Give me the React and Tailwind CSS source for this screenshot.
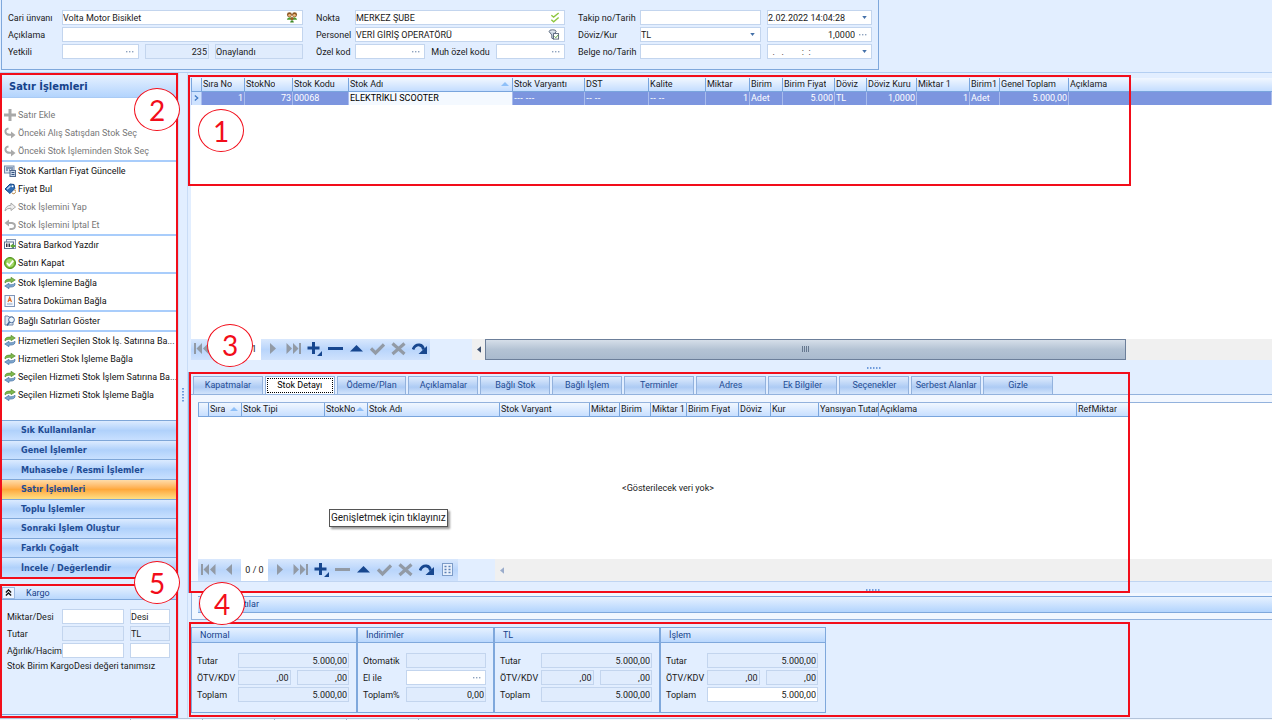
import React from "react";

const BOX = "flex h-[15px] min-w-0 items-center border border-[#c3d5ee] pr-px";

function Dots() {
  return (
    <svg viewBox="0 0 8 2" className="h-[2px] w-[8px]" fill="#8fa3bf">
      <rect x="0" width="1.4" height="1.4" />
      <rect x="3" width="1.4" height="1.4" />
      <rect x="6" width="1.4" height="1.4" />
    </svg>
  );
}

function Caret() {
  return (
    <svg viewBox="0 0 6 4" className="h-[3px] w-[5px]" fill="#4470a8">
      <path d="M0 0h6L3 4z" />
    </svg>
  );
}

function People() {
  return (
    <svg viewBox="0 0 12 12" className="h-[11px] w-[12px]">
      <circle cx="3.2" cy="3" r="2.700" fill="#8a5420" />
      <circle cx="8.8" cy="3" r="2.700" fill="#8a5420" />
      <circle cx="3.4" cy="3.6" r="1.5" fill="#efb67e" />
      <circle cx="8.6" cy="3.6" r="1.5" fill="#efb67e" />
      <path d="M.4 8.500Q.8 5.600 3.400 5.600T6 7.400Q6.300 5.600 8.600 5.600T11.600 8.500z" fill="#4d9a2e" />
      <circle cx="6" cy="7.200" r="1.800" fill="#9c5f2c" />
      <path d="M4 11.500Q4.200 9 6 9t2 2.500z" fill="#3f8a2a" />
    </svg>
  );
}

function DoubleCheck() {
  return (
    <svg viewBox="0 0 10 12" className="h-[11px] w-[10px]" fill="none" stroke="#8cc63f" strokeWidth="1.500">
      <path d="M1 3.500l2.500 2L9 1M1 8.500l2.500 2.200L9 6" />
    </svg>
  );
}

function Filter() {
  return (
    <svg viewBox="0 0 12 12" className="h-[11px] w-[12px]" fill="none" stroke="#566579">
      <ellipse cx="4.500" cy="2.500" rx="3.800" ry="1.600" fill="#e6ecf3" />
      <path d="M.8 3L3.600 6.500V10l2 1V6.500L8.200 3" fill="#cdd8e4" />
      <rect x="5.500" y="5" width="5.500" height="6" fill="#fff" />
      <path d="M6.500 8l1.500 1.500 2.500-3" stroke="#4b9a2f" />
    </svg>
  );
}

const ends = { dots: Dots, caret: Caret, people: People, check: DoubleCheck, filter: Filter };

function Field({ id, label, value = "", width, end, right, locked }) {
  const End = end ? ends[end] : null;
  return (
    <div className={`${BOX} ${width} ${locked ? "bg-[#e0ecfd]" : "bg-white"}`}>
      <input
        id={id}
        aria-label={label}
        defaultValue={value}
        readOnly={locked}
        className={`w-0 min-w-0 flex-1 bg-transparent outline-none ${right ? "text-right" : ""}`}
      />
      {End && (
        <button type="button" aria-label={`${label} seç`} className="ml-1 flex shrink-0 items-center justify-center pr-[3px]">
          <End />
        </button>
      )}
    </div>
  );
}

function Row({ htmlFor, text, labelWidth, children }) {
  return (
    <div className="flex h-[15px] items-center">
      <label htmlFor={htmlFor} className={`shrink-0 whitespace-nowrap ${labelWidth}`}>
        {text}
      </label>
      <div className="flex min-w-0 flex-1 items-center gap-[6px]">{children}</div>
    </div>
  );
}

function TopForm() {
  return (
    <header className="ml-px flex w-[878px] gap-[13px] border-x border-b border-[#7fa8dc] bg-[#e2eeff] py-[10px] pl-[6px] pr-[6px]">
      <div className="flex w-[295px] flex-col gap-[2px]">
        <Row htmlFor="cari" text="Cari ünvanı" labelWidth="w-[54px]">
          <Field id="cari" label="Cari ünvanı" value="Volta Motor Bisiklet" width="flex-1" end="people" />
        </Row>
        <Row htmlFor="aciklama" text="Açıklama" labelWidth="w-[54px]">
          <Field id="aciklama" label="Açıklama" width="flex-1" />
        </Row>
        <Row htmlFor="yetkili" text="Yetkili" labelWidth="w-[54px]">
          <Field id="yetkili" label="Yetkili" width="w-[77px]" end="dots" />
          <Field label="Yetkili no" value="235" width="w-[64px]" right locked />
          <Field label="Durum" value="Onaylandı" width="flex-1" locked />
        </Row>
      </div>
      <div className="flex w-[249px] flex-col gap-[2px]">
        <Row htmlFor="nokta" text="Nokta" labelWidth="w-[39px]">
          <Field id="nokta" label="Nokta" value="MERKEZ ŞUBE" width="flex-1" end="check" />
        </Row>
        <Row htmlFor="personel" text="Personel" labelWidth="w-[39px]">
          <Field id="personel" label="Personel" value="VERİ GİRİŞ OPERATÖRÜ" width="flex-1" end="filter" />
        </Row>
        <Row htmlFor="ozel" text="Özel kod" labelWidth="w-[39px]">
          <Field id="ozel" label="Özel kod" width="w-[72px]" end="dots" />
          <label htmlFor="muh" className="flex-1 whitespace-nowrap">Muh özel kodu</label>
          <Field id="muh" label="Muh özel kodu" width="w-[71px]" end="dots" />
        </Row>
      </div>
      <div className="flex min-w-0 flex-1 flex-col gap-[2px]">
        <Row htmlFor="takip" text="Takip no/Tarih" labelWidth="w-[62px]">
          <Field id="takip" label="Takip no" width="w-[121px]" />
          <Field label="Takip tarihi" value="2.02.2022 14:04:28" width="flex-1" end="caret" />
        </Row>
        <Row htmlFor="doviz" text="Döviz/Kur" labelWidth="w-[62px]">
          <div className={`${BOX} w-[121px] bg-white`}>
            <select id="doviz" className="w-0 flex-1 appearance-none bg-transparent outline-none">
              <option>TL</option>
            </select>
            <span className="pr-[4px]"><Caret /></span>
          </div>
          <Field label="Kur" value="1,0000" width="flex-1" end="dots" right />
        </Row>
        <Row htmlFor="belge" text="Belge no/Tarih" labelWidth="w-[62px]">
          <Field id="belge" label="Belge no" width="w-[121px]" />
          <Field label="Belge tarihi" value="  .   .        :  :" width="flex-1" end="caret" />
        </Row>
      </div>
    </header>
  );
}

const icons = {
  add: <path d="M4.500 0h3v4.500H12v3H7.500V12h-3V7.500H0v-3h4.500z" fill="#a9a9a9" />,
  pick: (
    <g>
      <path d="M4.500 1.500Q1 2 1.500 5t5 2.800H8" fill="none" stroke="#a9a9a9" strokeWidth="2" />
      <path d="M7 4.500L11.500 8 7 11.500z" fill="#a9a9a9" />
    </g>
  ),
  price: (
    <g>
      <rect x=".5" y="1" width="9.500" height="7" fill="#dbe5f2" stroke="#7489a8" />
      <path d="M2 3h7M2 5h2M5 5h1M7 5h2" stroke="#33527f" strokeWidth="1.200" />
      <rect x="6" y="5.500" width="5.500" height="6" fill="#c9d6e8" stroke="#50688d" />
      <path d="M7.500 7.500h3M7.500 9.500h3" stroke="#33527f" />
    </g>
  ),
  tag: (
    <g>
      <path d="M1 6L6 1l4 .5.8 4L6 10.500z" fill="#2f6cb3" stroke="#174a8a" />
      <path d="M3 6.300L6.500 3" stroke="#b8d4f4" strokeWidth="1.400" />
      <circle cx="8.500" cy="3.200" r="1" fill="#fff" />
      <path d="M8 10q2 2 3.500-.5T10 7" fill="none" stroke="#b98a4a" />
    </g>
  ),
  forward: <path d="M1 10Q1.500 4.500 7 4.200V2l4.500 4L7 9.500V7.200Q3 7 1 10z" fill="#eee" stroke="#a9a9a9" />,
  undo: (
    <g>
      <path d="M4 4h4q3 .3 3 3t-3 3H5.500" fill="none" stroke="#a9a9a9" strokeWidth="1.800" />
      <path d="M5 .5v7L.5 4z" fill="#a9a9a9" />
    </g>
  ),
  barcode: (
    <g>
      <rect x="2.500" y=".5" width="9" height="9" fill="#eef3fa" stroke="#8496b3" />
      <rect x=".5" y="3" width="9" height="6.500" fill="#fff" stroke="#5f7291" />
      <path d="M2.500 4.500v3.500M4 4.500v3.500M5.500 4.500v3.500" stroke="#334" />
      <path d="M6 7l3-2.500V6h2.500v2H9v1.500z" fill="#62a83a" />
    </g>
  ),
  ok: (
    <g>
      <circle cx="6" cy="6" r="5.500" fill="#79bd35" stroke="#4f8f1c" />
      <circle cx="6" cy="6" r="3.900" fill="#a5d86c" />
      <path d="M3 6l2.200 2.500L9.300 3.600" fill="none" stroke="#fff" strokeWidth="1.700" />
    </g>
  ),
  link: (
    <g>
      <path d="M1 6Q.5 2.300 5 2.100h2V.3L11.300 3 7 5.700V4.300H5Q2.500 4.300 1 6z" fill="#7fb94c" stroke="#4d8428" strokeWidth=".6" />
      <path d="M11 6.200q.5 3.700-4 3.900H5v1.600L.7 9 5 6.300v1.400h2q2.500 0 4-1.500z" fill="#7da6cf" stroke="#3a689a" strokeWidth=".6" />
    </g>
  ),
  doc: (
    <g>
      <rect x="1" y=".5" width="9.500" height="11" fill="#f5f8fd" stroke="#7f95b8" />
      <path d="M4 7L5.700 2.500 7.500 7M4.500 5.500h2.500" fill="none" stroke="#df702b" strokeWidth="1.200" />
      <path d="M3 9h5.500" stroke="#8ea3c2" />
    </g>
  ),
  search: (
    <g>
      <path d="M1 1h3l1 1h4v8H1z" fill="#dfe8f4" stroke="#7388a9" />
      <circle cx="7.500" cy="4.800" r="2.900" fill="#eef8ff" stroke="#46689a" />
      <path d="M5.500 7L3 10.500" stroke="#46689a" strokeWidth="1.600" />
    </g>
  ),
};

const actionGroups = [
  [
    ["add", "Satır Ekle", true],
    ["pick", "Önceki Alış Satışdan Stok Seç", true],
    ["pick", "Önceki Stok İşleminden Stok Seç", true],
  ],
  [
    ["price", "Stok Kartları Fiyat Güncelle"],
    ["tag", "Fiyat Bul"],
    ["forward", "Stok İşlemini Yap", true],
    ["undo", "Stok İşlemini İptal Et", true],
  ],
  [
    ["barcode", "Satıra Barkod Yazdır"],
    ["ok", "Satırı Kapat"],
  ],
  [
    ["link", "Stok İşlemine Bağla"],
    ["doc", "Satıra Doküman Bağla"],
  ],
  [["search", "Bağlı Satırları Göster"]],
  [
    ["link", "Hizmetleri Seçilen Stok İş. Satırına Ba..."],
    ["link", "Hizmetleri Stok İşleme Bağla"],
    ["link", "Seçilen Hizmeti Stok İşlem Satırına Ba..."],
    ["link", "Seçilen Hizmeti Stok İşleme Bağla"],
  ],
];

const sections = [
  "Sık Kullanılanlar",
  "Genel İşlemler",
  "Muhasebe / Resmi İşlemler",
  "Satır İşlemleri",
  "Toplu İşlemler",
  "Sonraki İşlem Oluştur",
  "Farklı Çoğalt",
  "İncele / Değerlendir",
];

function Frame({ size = "inset-0" }) {
  return <div className={`pointer-events-none absolute z-10 border-2 border-[#f20d1a] ${size}`} />;
}

function Badge({ n, place }) {
  return (
    <div
      className={`absolute z-20 flex h-[43px] w-[46px] items-center justify-center rounded-[50%] border border-[#f20d1a] bg-white font-[Lato,sans-serif] text-[28px] leading-none text-[#f20d1a] ${place}`}
    >
      {n}
    </div>
  );
}

function Sidebar() {
  return (
    <section className="relative flex flex-1 flex-col bg-white p-[2px]">
      <h2 className="h-[23px] shrink-0 border-b border-[#a9cbf5] bg-linear-to-b from-[#e6f1ff] to-[#b3d4fd] pl-[7px] font-['DejaVu_Sans_Condensed',sans-serif] text-[11px] font-bold leading-[24px] text-[#15428b]">
        Satır İşlemleri
      </h2>
      <div className="flex-1 divide-y-2 divide-[#a9cdfb] pt-[8px]">
        {actionGroups.map((group, i) => (
          <ul key={i}>
            {group.map(([icon, text, off]) => (
              <li key={text}>
                <button
                  type="button"
                  disabled={off}
                  className={`flex h-[18px] w-full items-center gap-[2px] whitespace-nowrap pl-[2px] ${off ? "text-[#777]" : "text-[#111]"}`}
                >
                  <svg viewBox="0 0 12 12" className="h-[12px] w-[12px] shrink-0">{icons[icon]}</svg>
                  {text}
                </button>
              </li>
            ))}
          </ul>
        ))}
      </div>
      <nav className="grid h-[157px] shrink-0 auto-rows-fr font-['DejaVu_Sans_Condensed',sans-serif] font-bold text-[#1f4c94]">
        {sections.map((s) => (
          <button
            key={s}
            type="button"
            className={`border-t border-[#7ea6d8] pl-[19px] text-left ${
              s === "Satır İşlemleri"
                ? "bg-linear-to-b from-[#ffdca8] from-0% via-[#ffa83a] via-50% to-[#ffdf84]"
                : "bg-linear-to-b from-[#dcebff] from-0% via-[#b0d1fb] via-50% to-[#c8e0ff]"
            }`}
          >
            {s}
          </button>
        ))}
      </nav>
      <Frame />
      <Badge n="2" place="left-[134px] top-[15px]" />
    </section>
  );
}

function Cargo() {
  return (
    <section className="relative h-[134px] shrink-0 bg-[#e2eeff] p-[2px] pb-[3px]">
      <div className="flex h-full flex-col border-b border-[#7fa8dc]">
        <div className="flex h-[14px] items-center border-b border-[#7fa8dc] bg-linear-to-b from-[#e6f1ff] to-[#b9d7fd] text-[#15428b]">
          <button type="button" aria-label="Daralt" className="flex h-[12px] w-[13px] items-center justify-center border border-[#9dbbe2] bg-[#eef5ff]">
            <svg viewBox="0 0 8 8" className="h-[7px] w-[7px]" fill="none" stroke="#111" strokeWidth="1.500">
              <path d="M1 4l3-3 3 3M1 7.500l3-3 3 3" />
            </svg>
          </button>
          <h3 className="pl-[11px]">Kargo</h3>
        </div>
        <div className="flex flex-col gap-[2px] pl-[5px] pr-[6px] pt-[9px]">
          <Row htmlFor="desi" text="Miktar/Desi" labelWidth="w-[55px]">
            <Field id="desi" label="Miktar" width="w-[62px]" />
            <Field label="Desi" value="Desi" width="flex-1" />
          </Row>
          <Row htmlFor="ktutar" text="Tutar" labelWidth="w-[55px]">
            <Field id="ktutar" label="Tutar" width="w-[62px]" locked />
            <Field label="Para birimi" value="TL" width="flex-1" locked />
          </Row>
          <Row htmlFor="agirlik" text="Ağırlık/Hacim" labelWidth="w-[55px]">
            <Field id="agirlik" label="Ağırlık" width="w-[62px]" />
            <Field label="Hacim" width="flex-1" />
          </Row>
          <p className="whitespace-nowrap">Stok Birim KargoDesi değeri tanımsız</p>
        </div>
      </div>
      <Frame />
      <Badge n="5" place="-top-[23px] left-[134px]" />
    </section>
  );
}

const Sort = () => (
  <svg viewBox="0 0 8 4" className="h-[4px] w-[8px] shrink-0" fill="#8fc0f8">
    <path d="M0 4h8L4 0z" />
  </svg>
);

function Grid({ columns, rows = [], label, className = "", heads }) {
  return (
    <table aria-label={label} className={`table-fixed border-collapse whitespace-nowrap ${className}`}>
      <colgroup>
        {columns.map((c) => (
          <col key={c.key} className={c.w} />
        ))}
      </colgroup>
      <thead>
        <tr className={`bg-linear-to-b from-[#f1f7ff] to-[#c4ddff] ${heads}`}>
          {columns.map((c) => (
            <th key={c.key} className="overflow-hidden border-x border-b border-[#79a5dd] p-0 pl-px text-left font-normal last:border-r-0">
              <div className="flex items-center justify-between overflow-hidden">
                <span className="min-w-0 overflow-hidden">{c.t}</span>
                {c.sort && <span className="pr-[3px]"><Sort /></span>}
              </div>
            </th>
          ))}
        </tr>
      </thead>
      <tbody>
        {rows.map((r, i) => (
          <tr key={i} className="h-[14px] bg-[#7c95df] text-white">
            {columns.map((c) => (
              <td
                key={c.key}
                className={`overflow-hidden border-x border-[#a9bcec] p-0 px-px ${c.right ? "text-right" : ""} ${
                  c.dashes ? "font-['Liberation_Sans',sans-serif]" : ""
                } ${c.key === "mark" ? "bg-[#cfe3ff] text-[#2b62b0]" : c.key === "ad" ? "bg-[#f4f9ff] text-black" : ""}`}
              >
                {c.key === "mark" ? (
                  <svg viewBox="0 0 6 8" className="mx-auto h-[8px] w-[5px]" fill="none" stroke="#3f78c6" strokeWidth="1.500">
                    <path d="M1 1l3.500 3L1 7" />
                  </svg>
                ) : (
                  r[c.key]
                )}
              </td>
            ))}
          </tr>
        ))}
      </tbody>
    </table>
  );
}

const lineColumns = [
  { key: "mark", t: "", w: "w-[10px]" },
  { key: "sira", t: "Sıra No", w: "w-[43px]", right: true },
  { key: "no", t: "StokNo", w: "w-[48px]", right: true },
  { key: "kod", t: "Stok Kodu", w: "w-[56px]" },
  { key: "ad", t: "Stok Adı", w: "w-[164px]", sort: true },
  { key: "var", t: "Stok Varyantı", w: "w-[72px]", dashes: true },
  { key: "dst", t: "DST", w: "w-[64px]", dashes: true },
  { key: "kal", t: "Kalite", w: "w-[57px]", dashes: true },
  { key: "mik", t: "Miktar", w: "w-[44px]", right: true },
  { key: "bir", t: "Birim", w: "w-[33px]" },
  { key: "fiy", t: "Birim Fiyat", w: "w-[52px]", right: true },
  { key: "dov", t: "Döviz", w: "w-[32px]" },
  { key: "kur", t: "Döviz Kuru", w: "w-[50px]", right: true },
  { key: "mik1", t: "Miktar 1", w: "w-[53px]", right: true },
  { key: "bir1", t: "Birim1", w: "w-[30px]" },
  { key: "top", t: "Genel Toplam", w: "w-[69px]", right: true },
  { key: "acik", t: "Açıklama", w: "w-auto" },
];

const lineRows = [
  {
    sira: "1", no: "73", kod: "00068", ad: "ELEKTRİKLİ SCOOTER", var: "--- ---", dst: "-- --", kal: "-- --",
    mik: "1", bir: "Adet", fiy: "5.000", dov: "TL", kur: "1,0000", mik1: "1", bir1: "Adet", top: "5.000,00",
  },
];

const detailColumns = [
  { key: "mark", t: "", w: "w-[10px]" },
  { key: "sira", t: "Sıra", w: "w-[33px]", sort: true },
  { key: "tip", t: "Stok Tipi", w: "w-[83px]" },
  { key: "no", t: "StokNo", w: "w-[43px]", sort: true },
  { key: "ad", t: "Stok Adı", w: "w-[132px]" },
  { key: "var", t: "Stok Varyant", w: "w-[90px]" },
  { key: "mik", t: "Miktar", w: "w-[30px]" },
  { key: "bir", t: "Birim", w: "w-[31px]" },
  { key: "mik1", t: "Miktar 1", w: "w-[36px]" },
  { key: "fiy", t: "Birim Fiyat", w: "w-[52px]" },
  { key: "dov", t: "Döviz", w: "w-[32px]" },
  { key: "kur", t: "Kur", w: "w-[48px]" },
  { key: "yan", t: "Yansıyan Tutar", w: "w-[60px]" },
  { key: "acik", t: "Açıklama", w: "w-[198px]" },
  { key: "ref", t: "RefMiktar", w: "w-[52px]" },
];

const GREY = "#929aa5";
const NAVY = "#17478f";

const nav = {
  first: ["İlk", <path key="p" fill={GREY} d="M0 1h2v11H0zM8 1v11L2.500 6.500zM14.500 1v11L9 6.500z" />],
  prev: ["Önceki", <path key="p" fill={GREY} d="M10 1v11L4 6.500z" />],
  next: ["Sonraki", <path key="p" fill={GREY} d="M5 1l6 5.500L5 12z" />],
  last: ["Son", <path key="p" fill={GREY} d="M.5 1L6 6.500.5 12zM7 1l5.500 5.500L7 12zM13 1h2v11h-2z" />],
  plus: ["Ekle", <path key="p" fill={NAVY} d="M5 0h3v4.500h4.500v3H8V12H5V7.500H.5v-3H5zM15 9v5h-5z" />],
  minus: ["Sil", <path key="p" fill={NAVY} d="M0 5h15v3H0z" />],
  minusOff: ["Sil", <path key="p" fill={GREY} d="M0 5h15v3H0z" />],
  up: ["Düzenle", <path key="p" fill={NAVY} d="M1 9.500L7.500 3l6.500 6.500z" />],
  check: ["Kaydet", <path key="p" fill="none" stroke={GREY} strokeWidth="3.200" d="M1 6.500L5.500 11 14 2.500" />],
  cross: ["İptal", <path key="p" fill="none" stroke={GREY} strokeWidth="3.200" d="M1.500 1.500l12 10.500M13.500 1.500l-12 10.500" />],
  redo: ["Yenile", (
    <g key="p">
      <path fill="none" stroke={NAVY} strokeWidth="2.800" d="M1 7.500Q3 2.500 7.500 3q3.500.5 4 4.500" />
      <path fill={NAVY} d="M15 4v8H6.500z" />
    </g>
  )],
  list: ["Liste", (
    <g key="p">
      <rect x="2.500" y=".5" width="10" height="12" fill="#e8f1fd" stroke="#7d9cc8" />
      <path d="M4.500 3.500h2M8.500 3.500h2M4.500 6.500h2M8.500 6.500h2M4.500 9.500h2M8.500 9.500h2" stroke="#5c80b4" strokeWidth="1.400" />
    </g>
  )],
};

function Toolbar({ names, count, className }) {
  return (
    <div className={`flex shrink-0 items-stretch bg-[#e2eeff] ${className}`}>
      <div className="flex items-stretch bg-linear-to-b from-[#d9e8fd] from-0% via-[#b9d5fb] via-50% to-[#cfe2fd]">
        {names.map((n, i) =>
          n === "count" ? (
            <span key={i} className="mx-px flex w-[27px] items-center justify-center bg-white">{count}</span>
          ) : (
            <button key={i} type="button" aria-label={nav[n][0]} className="flex w-[21px] items-center justify-center">
              <svg viewBox="0 0 15 14" className="h-[14px] w-[15px]">{nav[n][1]}</svg>
            </button>
          )
        )}
      </div>
    </div>
  );
}

function Grip({ tall }) {
  return (
    <svg viewBox={tall ? "0 0 2 15" : "0 0 15 2"} className={tall ? "h-[15px] w-[2px]" : "h-[2px] w-[15px]"} fill="#6f9bdc">
      {[0, 3, 6, 9, 12].map((p) =>
        tall ? <rect key={p} y={p} width="2" height="1.500" /> : <rect key={p} x={p} width="1.500" height="2" />
      )}
    </svg>
  );
}

const tabs = [
  "Kapatmalar", "Stok Detayı", "Ödeme/Plan", "Açıklamalar", "Bağlı Stok", "Bağlı İşlem",
  "Terminler", "Adres", "Ek Bilgiler", "Seçenekler", "Serbest Alanlar", "Gizle",
];

function LineGrid() {
  return (
    <section className="relative flex flex-1 flex-col pl-[3px] pt-[5px]">
      <div className="flex-1 bg-white">
        <Grid label="Satırlar" columns={lineColumns} rows={lineRows} className="w-full" heads="h-[13px]" />
      </div>
      <div className="flex h-[21px]">
        <Toolbar
          className="w-[281px]"
          count="1 / 1"
          names={["first", "prev", "count", "next", "last", "plus", "minus", "up", "check", "cross", "redo"]}
        />
        <div className="flex min-w-0 flex-1 items-center bg-[#f0f0f0]">
          <button type="button" aria-label="Sola kaydır" className="flex h-full w-[13px] items-center justify-center">
            <svg viewBox="0 0 5 8" className="h-[7px] w-[4px]" fill="#3c4f6d"><path d="M5 0v8L0 4z" /></svg>
          </button>
          <div className="flex h-[21px] w-[641px] items-center justify-center border border-[#6c7f9a] bg-linear-to-b from-[#d5dee9] from-0% via-[#b4c3d4] via-50% to-[#a9bace]">
            <svg viewBox="0 0 8 6" className="h-[6px] w-[8px]" stroke="#66788f"><path d="M.5 0v6M2.500 0v6M4.500 0v6M6.500 0v6" /></svg>
          </div>
        </div>
      </div>
      <Frame size="left-0 top-[2px] h-[111px] w-[943px]" />
      <Badge n="1" place="left-[10px] top-[36px]" />
      <Badge n="3" place="bottom-[-7px] left-[19px]" />
    </section>
  );
}

function DetailPanel() {
  return (
    <section className="relative">
      <div className="border-l border-[#8fb3e2] pt-[4px]">
        <div role="tablist" className="ml-[4px] flex w-[860px] gap-[2px]">
          {tabs.map((t) => (
            <button
              key={t}
              type="button"
              role="tab"
              aria-selected={t === "Stok Detayı"}
              className={`h-[18px] min-w-0 flex-1 basis-0 whitespace-nowrap border border-b-0 border-[#93b2dd] p-px ${
                t === "Stok Detayı"
                  ? "bg-white text-black"
                  : "bg-linear-to-b from-[#dfebfc] from-0% via-[#adcbf4] via-60% to-[#d3e4fb] text-[#1f4c94]"
              }`}
            >
              <span className={`flex h-full items-center justify-center ${t === "Stok Detayı" ? "border border-dotted border-black" : ""}`}>{t}</span>
            </button>
          ))}
        </div>
        <div className="border-t border-[#93b2dd] bg-[#f2f7ff] pt-[7px]">
          <div className="ml-[9px] border-t border-[#93b2dd] bg-white">
            <Grid label="Stok detayı" columns={detailColumns} className="w-[930px]" heads="h-[14px]" />
            <div className="relative flex h-[142px] w-[940px] items-center justify-center">
              <p>&lt;Gösterilecek veri yok&gt;</p>
              <div role="tooltip" className="absolute left-[131px] top-[92px] border border-[#555] bg-white px-px text-[10px] leading-[16px] shadow-[2px_2px_2px_#0006]">
                Genişletmek için tıklayınız
              </div>
            </div>
            <div className="flex h-[22px]">
              <Toolbar
                className="w-[297px]"
                count="0 / 0"
                names={["first", "prev", "count", "next", "last", "plus", "minusOff", "up", "check", "cross", "redo", "list"]}
              />
              <div className="flex flex-1 items-center bg-[#f0f0f0] pl-[5px]">
                <svg viewBox="0 0 5 8" className="h-[7px] w-[4px]" fill="#9aaccb"><path d="M5 0v8L0 4z" /></svg>
              </div>
            </div>
          </div>
          <div className="flex h-[12px] items-center border-t border-[#c0d5f2] bg-[#e2eeff] pl-[677px] pt-[4px]">
            <Grip />
          </div>
        </div>
      </div>
      <Frame size="left-px top-0 h-full w-[941px]" />
    </section>
  );
}

function TotalsPanel({ id, title, width, rows, labelWidth }) {
  return (
    <section className={`border border-[#7fa8dc] bg-[#e2eeff] ${width}`}>
      <h3 className="h-[15px] border-b border-[#7fa8dc] bg-linear-to-b from-[#e6f1ff] to-[#b9d7fd] pl-[8px] leading-[14px] text-[#15428b]">{title}</h3>
      <div className="flex flex-col gap-[2px] pb-[10px] pl-[5px] pr-[7px] pt-[10px]">
        {rows.map(([label, fields], i) => (
          <Row key={label} htmlFor={`${id}${i}`} text={label} labelWidth={labelWidth}>
            {fields.map((f, j) => (
              <Field key={j} id={j === 0 ? `${id}${i}` : undefined} label={label} value={f.v} right locked={!f.open} end={f.end} width="flex-1" />
            ))}
          </Row>
        ))}
      </div>
    </section>
  );
}

function totals(open) {
  return [
    ["Tutar", [{ v: "5.000,00" }]],
    ["ÖTV/KDV", [{ v: ",00" }, { v: ",00" }]],
    ["Toplam", [{ v: "5.000,00", open }]],
  ];
}

function Totals() {
  return (
    <section className="relative pb-[4px] pl-[3px] pt-[5px]">
      <div className="flex">
        <TotalsPanel id="n" title="Normal" width="w-[166px]" labelWidth="w-[41px]" rows={totals(false)} />
        <TotalsPanel
          id="i"
          title="İndirimler"
          width="w-[137px]"
          labelWidth="w-[43px]"
          rows={[
            ["Otomatik", [{ v: "" }]],
            ["El ile", [{ v: "", open: true, end: "dots" }]],
            ["Toplam%", [{ v: "0,00" }]],
          ]}
        />
        <TotalsPanel id="t" title="TL" width="w-[166px]" labelWidth="w-[41px]" rows={totals(false)} />
        <TotalsPanel id="s" title="İşlem" width="w-[166px]" labelWidth="w-[41px]" rows={totals(true)} />
      </div>
      <Frame size="left-px top-0 h-full w-[941px]" />
    </section>
  );
}

export default function App() {
  return (
    <div className="flex min-h-screen flex-col overflow-hidden bg-[#e2eeff] font-[Roboto,sans-serif] text-[9px] leading-[12px] text-[#1a1a1a]">
      <TopForm />
      <div className="mt-[2px] flex flex-1 border-t border-[#b4cff2]">
        <aside className="flex w-[178px] shrink-0 flex-col gap-[5px]">
          <Sidebar />
          <Cargo />
        </aside>
        <div className="flex w-[10px] shrink-0 items-center justify-center border-x border-[#c9dcf6] bg-[#e2eeff]">
          <Grip tall />
        </div>
        <main className="flex min-w-0 flex-1 flex-col pb-px">
          <LineGrid />
          <div className="flex h-[12px] items-center pl-[679px] pt-[4px]">
            <Grip />
          </div>
          <DetailPanel />
          <div className="relative mb-[2px] ml-[3px] border-b border-l border-[#93b2dd] bg-[#f2f7ff] pb-[6px] pl-[6px] pt-[3px]">
            <h3 className="h-[17px] border-y border-[#7fa8dc] bg-linear-to-b from-[#e6f1ff] to-[#b3d4fd] pl-[33px] leading-[15px] text-[#15428b]">Çıktılar</h3>
            <Badge n="4" place="-top-[11px] left-[7px]" />
          </div>
          <Totals />
        </main>
      </div>
      <footer className="flex h-[2px] border-t border-[#b3c3da] bg-[#f4f8fe]">
        <div className="w-[131px] border-r border-[#9fb2cd]" />
        <div className="w-[72px] border-r border-[#9fb2cd]" />
        <div className="w-[72px] border-r border-[#9fb2cd]" />
        <div className="w-[72px] border-r border-[#9fb2cd]" />
        <div className="w-[72px] border-r border-[#9fb2cd]" />
      </footer>
    </div>
  );
}
